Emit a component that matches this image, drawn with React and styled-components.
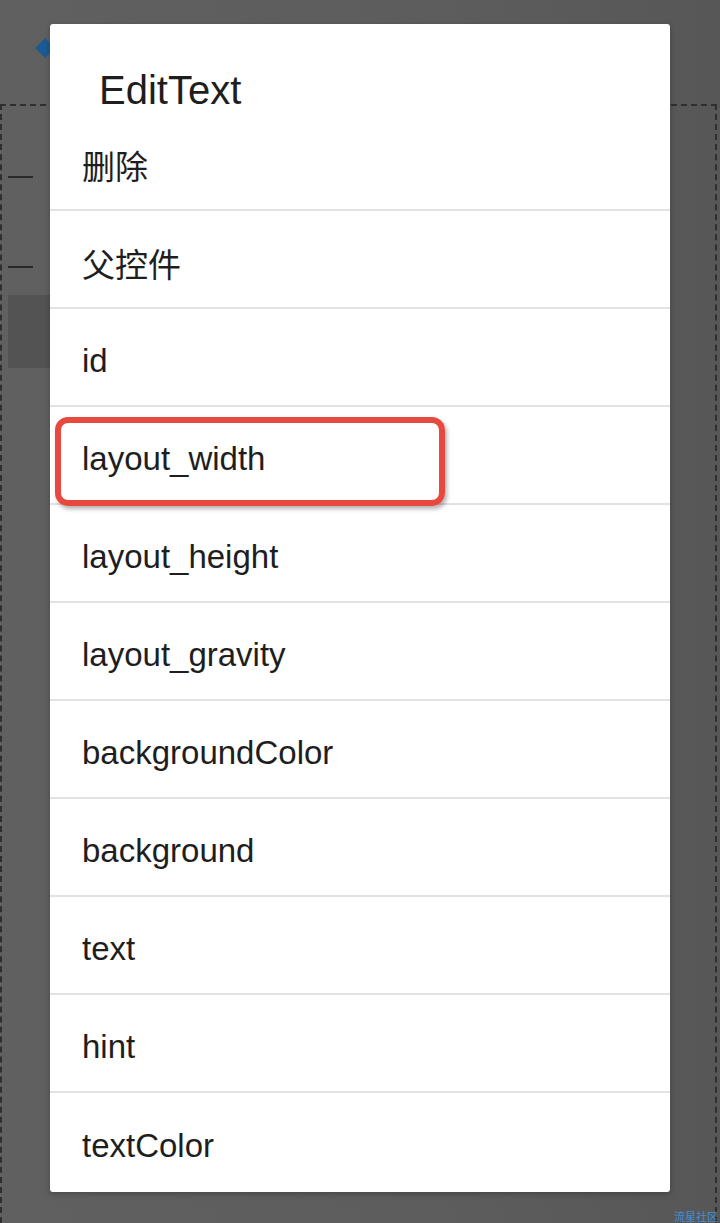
import React from "react";
import styled, { createGlobalStyle } from "styled-components";

const Global = createGlobalStyle`
  html, body {
    margin: 0;
    padding: 0;
    height: 100%;
  }
  body {
    background: linear-gradient(90deg, #606060 0%, #5d5d5d 60%, #575757 100%);
    font-family: "Liberation Sans", "Noto Sans CJK SC", sans-serif;
    overflow: hidden;
  }
`;

const Screen = styled.div`
  position: relative;
  width: 720px;
  height: 1223px;
  display: flex;
  flex-direction: column;
  overflow: hidden;
`;

const Header = styled.div`
  height: 104px;
  flex-shrink: 0;
  display: flex;
  align-items: flex-start;
  padding: 38px 0 0 38px;
  box-sizing: border-box;
`;

const BackArrow = styled.div`
  width: 14px;
  height: 14px;
  background: #1b5a94;
  transform: rotate(45deg);
  margin-top: 3px;
`;

const Canvas = styled.div`
  flex: 1;
  border: 2px dashed #2f2f2f;
  border-bottom: none;
  margin-right: 3px;
  display: flex;
  flex-direction: column;
  padding: 70px 0 0 6px;
`;

const Rule = styled.div`
  width: 25px;
  height: 2px;
  background: #2a2a2a;
  margin-bottom: ${(p) => p.gap}px;
`;

const Block = styled.div`
  height: 73px;
  background: #535353;
  width: 100px;
`;

const Dialog = styled.div`
  position: absolute;
  left: 50px;
  top: 24px;
  width: 620px;
  height: 1168px;
  background: #fff;
  border-radius: 3px;
  box-shadow: 0 2px 6px rgba(0, 0, 0, 0.25);
  display: flex;
  flex-direction: column;
  overflow: hidden;
`;

const Title = styled.div`
  height: 89px;
  box-sizing: border-box;
  padding: 46px 0 0 49px;
  font-size: 40px;
  line-height: 40px;
  color: #1e1e1e;
`;

const Row = styled.div`
  position: relative;
  height: 98px;
  box-sizing: border-box;
  flex-shrink: 0;
  display: flex;
  align-items: center;
  padding: 7px 0 0 32px;
  font-size: 33px;
  color: #1e1e1e;
  border-bottom: ${(p) => (p.last ? "none" : "2px solid #e2e2e2")};
`;

const Highlight = styled.div`
  position: absolute;
  left: 5px;
  top: 10px;
  width: 390px;
  height: 89px;
  box-sizing: border-box;
  border: 6px solid #e8493f;
  border-radius: 13px;
  box-shadow: 2px 3px 4px rgba(0, 0, 0, 0.3);
`;

const Watermark = styled.div`
  position: absolute;
  right: 2px;
  bottom: 0;
  font-size: 11px;
  line-height: 13px;
  color: #3f8fd8;
  font-family: "Noto Sans CJK SC", sans-serif;
  white-space: nowrap;
`;

const items = [
  "删除",
  "父控件",
  "id",
  "layout_width",
  "layout_height",
  "layout_gravity",
  "backgroundColor",
  "background",
  "text",
  "hint",
  "textColor",
];

export default function App() {
  return (
    <>
      <Global />
      <Screen>
        <Header>
          <BackArrow />
        </Header>
        <Canvas>
          <Rule gap={88} />
          <Rule gap={27} />
          <Block />
        </Canvas>
        <Dialog>
          <Title>EditText</Title>
          {items.map((name, i) => (
            <Row key={name} last={i === items.length - 1}>
              {name}
              {name === "layout_width" && <Highlight />}
            </Row>
          ))}
        </Dialog>
        <Watermark>流星社区</Watermark>
      </Screen>
    </>
  );
}
